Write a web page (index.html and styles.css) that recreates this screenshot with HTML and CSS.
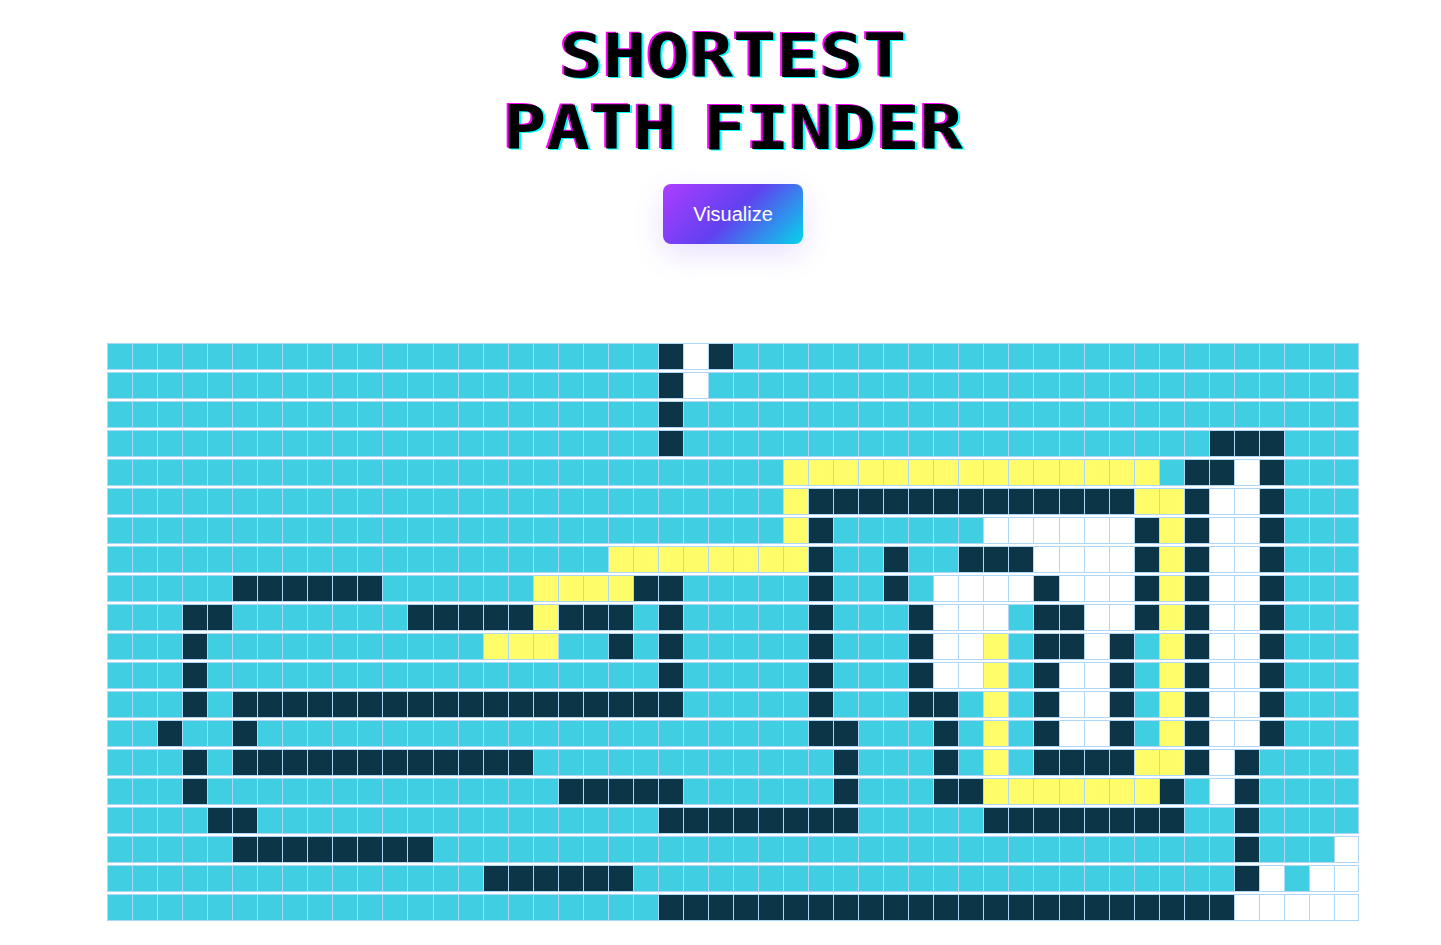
FILE: index.html
```html
<!DOCTYPE html>
<html lang="en">
<head>
    <meta charset="UTF-8">
    <meta name="viewport" content="width=device-width, initial-scale=1.0">
    <title>Shortest Path Finder</title>
    <link rel="stylesheet" href="styles.css">
</head>
<body>
    <main class="page">
        <h1 class="title">SHORTEST<br>PATH FINDER</h1>
        <button class="visualize">Visualize</button>
        <div class="grid" id="grid"></div>
    </main>
    <script src="script.js"></script>
</body>
</html>
```

FILE: styles.css
```css
* {
    box-sizing: border-box;
    margin: 0;
    padding: 0;
}

body {
    background-color: white;
    font-family: "Liberation Sans", Arial, sans-serif;
}

.page {
    display: flex;
    flex-direction: column;
    align-items: center;
    padding: 21px 0 24px 25px;
}

/* the font is narrower than the one we want, so it is set big and squashed */
.title {
    height: 142px;
    font-family: "DejaVu Sans Mono", monospace;
    font-size: 72px;
    font-weight: bold;
    line-height: 84.5px;
    word-spacing: -17px;
    text-align: center;
    color: black;
    text-shadow: -2px -1px 0 #ff00ff, 2px 1px 0 #00ffff;
    transform: scaleY(0.84);
    transform-origin: top;
}

.visualize {
    width: 140px;
    height: 60px;
    margin-top: 21px;
    border: none;
    border-radius: 8px;
    background: linear-gradient(135deg, #ad3dff 0%, #6041f0 50%, #05d5ea 100%);
    box-shadow: 0 10px 30px rgba(118, 60, 240, 0.16);
    color: white;
    font-family: "Liberation Sans", Arial, sans-serif;
    font-size: 20px;
    cursor: pointer;
}

.grid {
    display: grid;
    grid-template-columns: repeat(50, 1fr);
    grid-auto-rows: 27px;
    row-gap: 2px;
    width: 1252px;
    margin-top: 99px;
}

.node {
    border: 1px solid rgb(175, 216, 248);
    border-right: none;
    background-color: white;
}

.node:nth-child(50n) {
    border-right: 1px solid rgb(175, 216, 248);
}

.node-visited {
    background-color: rgb(64, 206, 227);
}

.node-wall {
    background-color: rgb(12, 53, 71);
}

.node-path {
    background-color: rgb(255, 254, 106);
}
```

FILE: script.js
```js
// . visited, # wall, o untouched, y shortest path
const rows = [
    '......................#o#.........................',
    '......................#o..........................',
    '......................#...........................',
    '......................#.....................###...',
    '...........................yyyyyyyyyyyyyyy.##o#...',
    '...........................y#############yy#oo#...',
    '...........................y#......oooooo#y#oo#...',
    '....................yyyyyyyy#..#..###oooo#y#oo#...',
    '.....######......yyyy##.....#..#.oooo#ooo#y#oo#...',
    '...##.......#####y###.#.....#...#ooo.##oo#y#oo#...',
    '...#...........yyy..#.#.....#...#ooy.##o#.y#oo#...',
    '...#..................#.....#...#ooy.#oo#.y#oo#...',
    '...#.##################.....#...##.y.#oo#.y#oo#...',
    '..#..#......................##...#.y.#oo#.y#oo#...',
    '...#.############............#...#.y.####yy#o#....',
    '...#..............#####......#...##yyyyyyy#.o#....',
    '....##................########.....########..#....',
    '.....########................................#...o',
    '...............######........................#o.oo',
    '......................#######################ooooo'
]

const classes = { '.': 'node-visited', '#': 'node-wall', 'y': 'node-path', 'o': '' }
const grid = document.getElementById('grid')

for (const row of rows) {
    for (const c of row) {
        const node = document.createElement('div')
        node.className = `node ${classes[c]}`
        grid.appendChild(node)
    }
}
```
